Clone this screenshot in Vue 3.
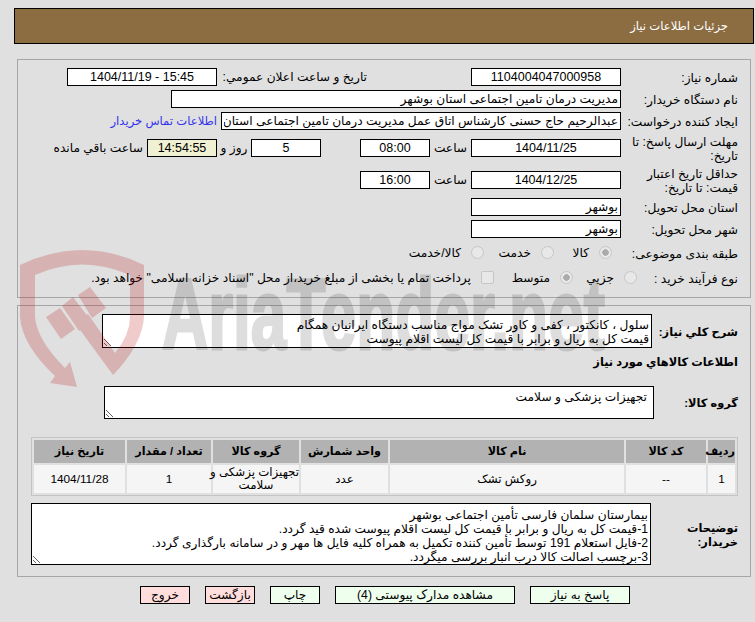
<script setup>
const headers = ['ردیف', 'کد کالا', 'نام کالا', 'واحد شمارش', 'گروه کالا', 'تعداد / مقدار', 'تاریخ نیاز']
const row = ['1', '--', 'روکش تشک', 'عدد', 'تجهیزات پزشکی و\nسلامت', '1', '1404/11/28']
const colWidths = [27, 80, 234, 87, 86, 84, 91]

const creator = 'عبدالرحیم حاج حسنی کارشناس اتاق عمل مدیریت درمان تامین اجتماعی استان بوشهر'
const summary = 'سلول ، کانکتور ، کفی و کاور تشک مواج مناسب دستگاه ایرانیان همگام\nقیمت کل به ریال و برابر با قیمت کل لیست اقلام پیوست'
const group = 'تجهیزات پزشکی و سلامت'
const notes = `بیمارستان سلمان فارسی تأمین اجتماعی بوشهر
1-قیمت کل به ریال و برابر با قیمت کل لیست اقلام پیوست شده قید گردد.
2-فایل استعلام 191 توسط تأمین کننده تکمیل به همراه کلیه فایل ها مهر و در سامانه بارگذاری گردد.
3-برچسب اصالت کالا درب انبار بررسی میگردد.`
</script>

<template>
  <div class="page" dir="rtl">
    <header class="title-bar">جزئیات اطلاعات نیاز</header>

    <section class="panel panel-top">
      <div class="row h18">
        <label class="lbl">شماره نیاز:</label>
        <input class="field w150 center" readonly value="1104004047000958" />
        <label class="lbl-wide">تاریخ و ساعت اعلان عمومي:</label>
        <input class="field w150 center" dir="ltr" readonly value="1404/11/19 - 15:45" />
      </div>
      <div class="row h18">
        <label class="lbl">نام دستگاه خریدار:</label>
        <input class="field w450" readonly value="مدیریت درمان تامین اجتماعی استان بوشهر" />
      </div>
      <div class="row h18">
        <label class="lbl">ایجاد کننده درخواست:</label>
        <input class="field w400" readonly :value="creator" />
        <a class="contact">اطلاعات تماس خریدار</a>
      </div>
      <div class="row h28">
        <label class="lbl">مهلت ارسال پاسخ: تا تاریخ:</label>
        <input class="field w150 center" readonly value="1404/11/25" />
        <span class="word w41">ساعت</span>
        <input class="field w70 center" readonly value="08:00" />
        <span class="spacer39"></span>
        <input class="field w70 center" readonly value="5" />
        <span class="word w34">روز و</span>
        <input class="field w70 center clock" readonly value="14:54:55" />
        <span class="remain">ساعت باقي مانده</span>
      </div>
      <div class="row h28">
        <label class="lbl">حداقل تاریخ اعتبار قیمت: تا تاریخ:</label>
        <input class="field w150 center" readonly value="1404/12/25" />
        <span class="word w41">ساعت</span>
        <input class="field w70 center" readonly value="16:00" />
      </div>
      <div class="row h18">
        <label class="lbl">استان محل تحویل:</label>
        <input class="field w150" readonly value="بوشهر" />
      </div>
      <div class="row h18">
        <label class="lbl">شهر محل تحویل:</label>
        <input class="field w150" readonly value="بوشهر" />
      </div>
      <div class="row h22">
        <label class="lbl">طبقه بندی موضوعی:</label>
        <span class="choices-a">
          <label class="choice w58"><input type="radio" name="kind" disabled checked />کالا</label>
          <label class="choice w70"><input type="radio" name="kind" disabled />خدمت</label>
          <label class="choice"><input type="radio" name="kind" disabled />کالا/خدمت</label>
        </span>
      </div>
      <div class="row h20">
        <label class="lbl lbl-short">نوع فرآیند خرید :</label>
        <label class="choice w64"><input type="radio" name="proc" disabled />جزیي</label>
        <label class="choice w79"><input type="radio" name="proc" disabled checked />متوسط</label>
        <label class="choice"><input type="checkbox" disabled />پرداخت تمام یا بخشی از مبلغ خرید،از محل "اسناد خزانه اسلامی" خواهد بود.</label>
      </div>
    </section>

    <section class="panel panel-bottom">
      <div class="block desc-row">
        <label class="lbl bold w86">شرح کلي نیاز:</label>
        <textarea class="area summary" readonly :value="summary"></textarea>
      </div>
      <h3 class="subhead">اطلاعات کالاهاي مورد نیاز</h3>
      <div class="block group-row">
        <label class="lbl bold w84">گروه کالا:</label>
        <textarea class="area group" readonly :value="group"></textarea>
      </div>

      <table class="items">
        <colgroup>
          <col v-for="w in colWidths" :key="w" :style="{ width: w + 'px' }" />
        </colgroup>
        <thead>
          <tr><th v-for="h in headers" :key="h">{{ h }}</th></tr>
        </thead>
        <tbody>
          <tr><td v-for="(c, i) in row" :key="i">{{ c }}</td></tr>
        </tbody>
      </table>

      <div class="block notes-row">
        <label class="lbl bold w87 wrap">توضیحات خریدار:</label>
        <textarea class="area notes" readonly :value="notes"></textarea>
      </div>
    </section>

    <div class="actions">
      <button class="btn green w100">پاسخ به نیاز</button>
      <button class="btn green w180">مشاهده مدارک پیوستی (4)</button>
      <button class="btn green w50">چاپ</button>
      <button class="btn pink w50">بازگشت</button>
      <button class="btn pink w50">خروج</button>
    </div>

    <!-- watermark sits on top of everything, inputs included -->
    <svg class="watermark" width="755" height="622" viewBox="0 0 755 622">
      <g fill="#b40000" opacity="0.2">
        <path d="M20 265 Q83 235 144 265 L144 317 Q142 345 113 375 L75 323 L88 314 L115 353 Q130 335 130 317 L130 275 Q82 254 35 275 L35 317 Q37 340 65 368 L70 362 L77 387 L50 383 L55 376 Q22 345 20 317 Z" />
        <path d="M46 317 L60 308 L75 329 L61 339 Z" />
        <path d="M62 306 L73 297 L92 322 L79 331 Z" />
        <path d="M78 295 L90 287 L106 308 L92 318 Z" />
      </g>
      <text class="wm-text" x="162" y="349" textLength="443" lengthAdjust="spacingAndGlyphs">AriaTender.net</text>
    </svg>
  </div>
</template>

<style scoped>
.page {
  position: relative;
  width: 755px;
  height: 622px;
  overflow: hidden;
  padding-top: 8px;
  box-sizing: border-box;
  font-family: "Liberation Sans", "DejaVu Sans", sans-serif;
  font-size: 12.2px;
  color: #000;
}
.title-bar {
  box-sizing: border-box;
  width: 740px;
  height: 36px;
  margin-right: 1px;
  padding-right: 25px;
  background: #8c6d42;
  border: 1px solid #000;
  color: #fff;
  font-size: 11.6px;
  line-height: 34px;
}
.panel {
  box-sizing: border-box;
  width: 734px;
  margin-right: 4px;
  padding-right: 12px;
  border: 1px solid #a6a6a6;
}
.panel-top {
  height: 239px;
  margin-top: 15px;
  padding-top: 8px;
  display: flex;
  flex-direction: column;
  gap: 4px;
}
.panel-bottom {
  height: 272px;
  margin-top: 7px;
  padding-top: 8px;
}
.row {
  display: flex;
  align-items: center;
}
.h18 { height: 18px; }
.h20 { height: 20px; }
.h22 { height: 22px; }
.h28 { height: 28px; }
.lbl {
  flex: 0 0 117px;
  padding-top: 1px;
  line-height: 14px;
}
.lbl-short { flex-basis: 101px; }
.lbl-wide {
  flex: 0 0 150px;
  margin-right: 104px;
  padding-left: 4px;
  box-sizing: border-box;
  white-space: nowrap;
}
.field {
  box-sizing: border-box;
  height: 18px;
  padding: 0 2px;
  border: 1px solid #000;
  border-radius: 0;
  background: #fff;
  font: inherit;
  color: #000;
  outline: none;
}
.w150 { width: 150px; }
.w450 { width: 450px; }
.w400 { width: 400px; }
.w70 { width: 70px; }
.center {
  text-align: center;
  font-size: 12.5px;
}
.clock { background: #f0f0d2; }
.contact {
  margin-right: 4px;
  color: #3333ee;
  font-size: 11.6px;
  white-space: nowrap;
}
.word {
  text-align: center;
  white-space: nowrap;
}
.w41 { width: 41px; }
.w34 { width: 34px; }
.spacer39 { width: 39px; }
.remain {
  margin-right: 4px;
  white-space: nowrap;
}
.choices-a {
  display: flex;
  margin-right: 9px;
}
.choice {
  display: flex;
  align-items: center;
  gap: 10px;
  white-space: nowrap;
}
.choice input {
  box-sizing: border-box;
  appearance: none;
  width: 13px;
  height: 13px;
  margin: -2px 0 0;
  flex: none;
  border: 1px solid #c6c6c6;
  background: #e8e8e8;
}
.choice input[type="radio"] { border-radius: 50%; }
.choice input[type="radio"]:checked {
  background: radial-gradient(circle, #ababab 0 3px, #e8e8e8 3.5px);
}
.choice input[type="checkbox"] { border-radius: 2px; }
.w58 { width: 58px; }
.w64 { width: 64px; }
.w79 { width: 79px; }

.block {
  display: flex;
}
.bold {
  font-size: 11.4px;
  font-weight: 700;
  align-self: center;
  white-space: nowrap;
}
.wrap { white-space: normal; }
.w84 { flex-basis: 84px; }
.w86 { flex-basis: 86px; }
.w87 { flex-basis: 87px; }
.area {
  box-sizing: border-box;
  display: block;
  padding: 3px 2px;
  border: 1px solid #000;
  border-radius: 0;
  background: #fff;
  font: inherit;
  line-height: 14px;
  color: #000;
  outline: none;
  overflow: hidden;
  resize: both;
}
.summary { width: 550px; height: 34px; }
.group { width: 550px; height: 33px; padding-top: 3px; padding-right: 6px; }
.notes { width: 620px; height: 62px; padding: 4px 2px 0; }
.subhead {
  margin: 5px 0 0;
  height: 19px;
  font-size: 11.4px;
  font-weight: 700;
  line-height: 19px;
}
.group-row { margin-top: 14px; }
.items {
  box-sizing: border-box;
  width: 707px;
  margin-top: 18px;
  table-layout: fixed;
  border-collapse: separate;
  border-spacing: 2px;
  border: 1px solid #c4c4c4;
}
.items th {
  height: 23px;
  padding: 0;
  background: #b2b2b2;
  font-size: 11.2px;
  font-weight: 700;
  white-space: nowrap;
}
.items td {
  height: 28px;
  padding: 0;
  background: #f5f5f5;
  text-align: center;
  font-size: 11.8px;
  line-height: 13px;
  white-space: pre;
}
.notes-row { margin-top: 7px; }
.actions {
  display: flex;
  gap: 15px;
  margin-top: 9px;
  margin-right: 125px;
}
.btn {
  box-sizing: border-box;
  height: 18px;
  padding: 0;
  border: 1px solid #000;
  border-radius: 0;
  font: inherit;
  line-height: 16px;
  color: #000;
}
.green { background: #eeffee; }
.pink { background: #ffdddd; }
.w100 { width: 100px; }
.w180 { width: 180px; }
.w50 { width: 50px; }
.watermark {
  position: absolute;
  top: 0;
  left: 0;
  direction: ltr;
  pointer-events: none;
}
.wm-text {
  direction: ltr;
  font-family: "Liberation Sans", sans-serif;
  font-weight: 700;
  font-size: 100px;
  fill: #000;
  stroke: #000;
  stroke-width: 3px;
  opacity: 0.13;
}
</style>

<style>
html, body {
  margin: 0;
  background: #e0e0e0;
}
</style>
